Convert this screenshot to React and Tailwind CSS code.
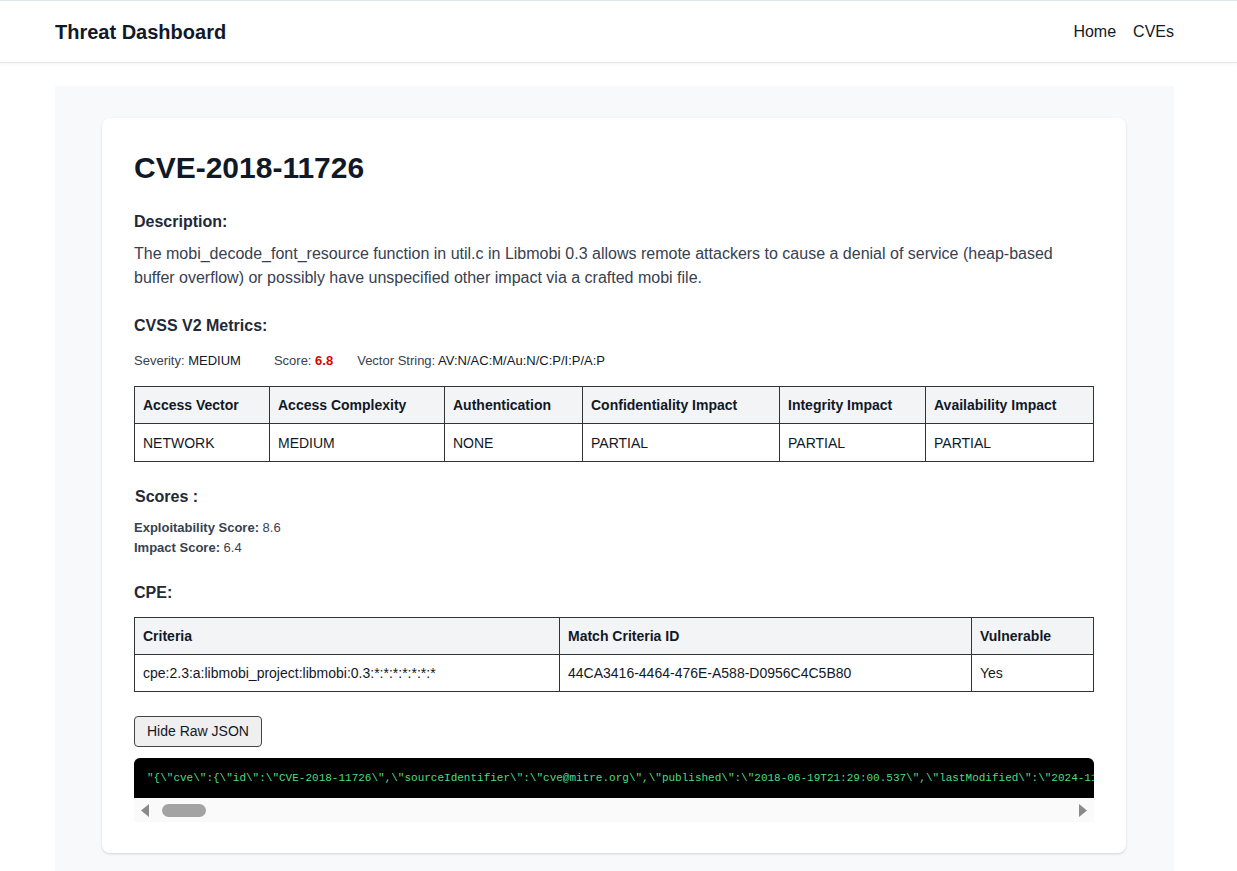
import React from "react";

const json =
  '"{\\"cve\\":{\\"id\\":\\"CVE-2018-11726\\",\\"sourceIdentifier\\":\\"cve@mitre.org\\",\\"published\\":\\"2018-06-19T21:29:00.537\\",\\"lastModified\\":\\"2024-11-21T03:43:53.063\\",\\"vulnStatus\\":\\"Modified\\",\\"cveTags\\":[],\\"descriptions\\":[{\\"lang\\":\\"en\\",\\"value\\":\\"The mobi_decode_font_resource function in util.c in Libmobi 0.3 allows remote attackers to cause a denial of service\\"}]}}"';

export default function App() {
  const cvss = [
    ["Access Vector", "NETWORK", "w-[135px]"],
    ["Access Complexity", "MEDIUM", "w-[175px]"],
    ["Authentication", "NONE", "w-[138px]"],
    ["Confidentiality Impact", "PARTIAL", "w-[197px]"],
    ["Integrity Impact", "PARTIAL", "w-[146px]"],
    ["Availability Impact", "PARTIAL", ""],
  ];
  return (
    <div className="min-h-[871px] bg-white text-gray-900" style={{ fontFamily: '"Liberation Sans", Arial, sans-serif' }}>
      <header className="h-[63px] border-t border-t-[#dde6ea] border-b border-b-gray-200 shadow-[0_1px_3px_rgba(0,0,0,0.05)] bg-white">
        <div className="ml-[55px] w-[1119px] h-full flex items-center justify-between">
          <div className="text-[20px] font-bold text-[#111827]">Threat Dashboard</div>
          <nav className="flex gap-[17px] text-[16px] text-[#111827]">
            <span>Home</span>
            <span>CVEs</span>
          </nav>
        </div>
      </header>

      <main className="ml-[55px] w-[1119px] mt-[23px] bg-[#f8f9fa] pt-[32px] pb-[18px] pl-[47px] pr-[48px]">
        <div className="bg-white rounded-lg shadow-[0_1px_3px_rgba(0,0,0,0.1),0_1px_2px_rgba(0,0,0,0.06)] px-8 pt-[31px] pb-[31px]">
          <h1 className="text-[30px] leading-[38px] font-bold text-[#111827]">CVE-2018-11726</h1>

          <h2 className="mt-[23px] text-[16px] leading-6 font-bold text-[#1f2937]">Description:</h2>
          <p className="mt-[8px] text-[16px] leading-6 text-[#374151]">
            The mobi_decode_font_resource function in util.c in Libmobi 0.3 allows remote attackers to cause a denial of service (heap-based buffer overflow) or possibly have unspecified other impact via a crafted mobi file.
          </p>

          <h2 className="mt-[24px] text-[16px] leading-6 font-bold text-[#1f2937]">CVSS V2 Metrics:</h2>
          <div className="mt-[13px] text-[13px] leading-5 text-[#374151] flex">
            <span className="mr-[33px]">Severity: <span className="text-[#111827]">MEDIUM</span></span>
            <span className="mr-[24px]">Score: <span className="font-bold text-[#e00000]">6.8</span></span>
            <span>Vector String: <span className="text-[#111827]">AV:N/AC:M/Au:N/C:P/I:P/A:P</span></span>
          </div>

          <table className="mt-[15px] w-full border-collapse text-[14px] text-[#111827]">
            <thead>
              <tr className="bg-[#f3f4f6]">
                {cvss.map(([h, , w]) => (
                  <th key={h} className={`border border-[#333] px-2 py-2 leading-5 text-left font-bold ${w}`}>{h}</th>
                ))}
              </tr>
            </thead>
            <tbody>
              <tr>
                {cvss.map(([h, v]) => (
                  <td key={h} className="border border-[#333] px-2 py-2 leading-5 h-[38px]">{v}</td>
                ))}
              </tr>
            </tbody>
          </table>

          <h2 className="mt-[23px] ml-px text-[16px] leading-6 font-bold text-[#1f2937]">Scores :</h2>
          <div className="mt-[9px] text-[13px] leading-5 text-[#374151]">
            <div><span className="font-bold">Exploitability Score:</span> 8.6</div>
            <div><span className="font-bold">Impact Score:</span> 6.4</div>
          </div>

          <h2 className="mt-[23px] text-[16px] leading-6 font-bold text-[#1f2937]">CPE:</h2>
          <table className="mt-[12px] w-full border-collapse text-[14px] text-[#111827]">
            <thead>
              <tr className="bg-[#f3f4f6]">
                <th className="border border-[#333] px-2 py-2 leading-5 text-left font-bold w-[425px]">Criteria</th>
                <th className="border border-[#333] px-2 py-2 leading-5 text-left font-bold w-[412px]">Match Criteria ID</th>
                <th className="border border-[#333] px-2 py-2 leading-5 text-left font-bold">Vulnerable</th>
              </tr>
            </thead>
            <tbody>
              <tr>
                <td className="border border-[#333] px-2 py-2 leading-5 h-[37px]">cpe:2.3:a:libmobi_project:libmobi:0.3:*:*:*:*:*:*:*</td>
                <td className="border border-[#333] px-2 py-2 leading-5">44CA3416-4464-476E-A588-D0956C4C5B80</td>
                <td className="border border-[#333] px-2 py-2 leading-5">Yes</td>
              </tr>
            </tbody>
          </table>

          <button className="mt-[24px] h-[31px] px-3 bg-[#efefef] border border-[#444] rounded text-[14px] text-[#111827]">
            Hide Raw JSON
          </button>

          <div className="mt-[11px] w-full rounded-t-[6px] overflow-hidden">
            <pre
              className="bg-black text-[#4ade80] px-[13px] py-3 text-[11px] leading-4 whitespace-pre overflow-hidden"
              style={{ fontFamily: '"Liberation Mono", "DejaVu Sans Mono", monospace' }}
            >
              {json}
            </pre>
            <div className="h-[24px] bg-[#fafafa] flex items-center justify-between px-[6px]">
              <div className="flex items-center gap-[13px]">
                <svg width="9" height="13" viewBox="0 0 9 13"><polygon points="9,0 9,13 1,6.5" fill="#8a8a8a" /></svg>
                <div className="w-[44px] h-[13px] rounded-full bg-[#a3a3a3]" />
              </div>
              <svg width="9" height="13" viewBox="0 0 9 13"><polygon points="0,0 0,13 8,6.5" fill="#8a8a8a" /></svg>
            </div>
          </div>
        </div>
      </main>
    </div>
  );
}
